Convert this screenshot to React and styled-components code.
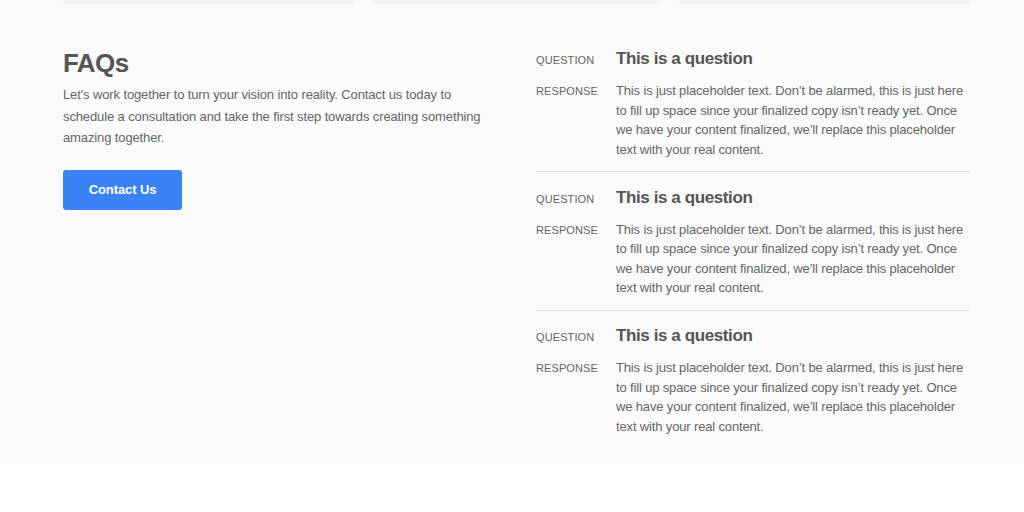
import styled, { createGlobalStyle } from 'styled-components';

const GlobalStyle = createGlobalStyle`
  html, body {
    margin: 0;
    padding: 0;
    background: #ffffff;
  }
  body {
    font-family: 'Liberation Sans', Arial, sans-serif;
  }
`;

const faqs = [1, 2, 3].map((id) => ({
  id,
  question: 'This is a question',
  response:
    'This is just placeholder text. Don\u2019t be alarmed, this is just here to fill up space since your finalized copy isn\u2019t ready yet. Once we have your content finalized, we\u2019ll replace this placeholder text with your real content.',
}));

export default function App() {
  return (
    <>
      <GlobalStyle />
      <Section>
        <CardStrip>
          <CardEdge />
          <CardEdge />
          <CardEdge />
        </CardStrip>
        <Content>
          <Intro>
            <Heading>FAQs</Heading>
            <Lead>
              Let's work together to turn your vision into reality. Contact us today to schedule a
              consultation and take the first step towards creating something amazing together.
            </Lead>
            <Button>Contact Us</Button>
          </Intro>
          <List>
            {faqs.map((f) => (
              <Item key={f.id}>
                <Row>
                  <Label>Question</Label>
                  <Question>{f.question}</Question>
                </Row>
                <Row>
                  <Label>Response</Label>
                  <Answer>{f.response}</Answer>
                </Row>
              </Item>
            ))}
          </List>
        </Content>
      </Section>
    </>
  );
}

const Section = styled.section`
  background: #fafafa;
  width: 1024px;
  padding-bottom: 28px;
`;

const CardStrip = styled.div`
  display: grid;
  grid-template-columns: repeat(3, 1fr);
  gap: 17px;
  padding: 0 54px 0 63px;
`;

const CardEdge = styled.div`
  height: 4px;
  background: #f3f3f3;
  border-radius: 0 0 4px 4px;
`;

const Content = styled.div`
  display: grid;
  grid-template-columns: 435px 434px;
  gap: 38px;
  padding: 42px 54px 0 63px;
`;

const Intro = styled.div`
  display: flex;
  flex-direction: column;
  align-items: flex-start;
  padding-top: 2px;
`;

const Heading = styled.h2`
  margin: 0 0 6px;
  font-size: 26px;
  line-height: 30px;
  font-weight: 700;
  letter-spacing: -0.6px;
  color: #555555;
`;

const Lead = styled.p`
  margin: 0 0 21px;
  width: 430px;
  font-size: 13px;
  line-height: 21.5px;
  letter-spacing: -0.12px;
  color: #666666;
`;

const Button = styled.button`
  width: 119px;
  height: 40px;
  border: none;
  border-radius: 3px;
  background: #3a82f6;
  color: #ffffff;
  font-family: 'Liberation Sans', Arial, sans-serif;
  font-size: 13px;
  font-weight: 700;
  letter-spacing: -0.1px;
  cursor: pointer;
`;

const List = styled.div`
  display: flex;
  flex-direction: column;
`;

const Item = styled.div`
  display: flex;
  flex-direction: column;
  gap: 10px;
  padding: 1px 0 12px;
  border-bottom: 1px solid #e2e2e2;

  & + & {
    padding-top: 13.5px;
  }

  &:last-child {
    border-bottom: none;
    padding-bottom: 0;
  }
`;

const Row = styled.div`
  display: grid;
  grid-template-columns: 80px 1fr;
  align-items: baseline;
`;

const Label = styled.div`
  font-size: 11px;
  line-height: 19.5px;
  text-transform: uppercase;
  letter-spacing: 0.1px;
  color: #666666;
`;

const Question = styled.div`
  font-size: 17px;
  line-height: 24px;
  font-weight: 700;
  letter-spacing: -0.4px;
  color: #555555;
`;

const Answer = styled.div`
  font-size: 13px;
  line-height: 19.5px;
  letter-spacing: -0.15px;
  color: #666666;
`;
